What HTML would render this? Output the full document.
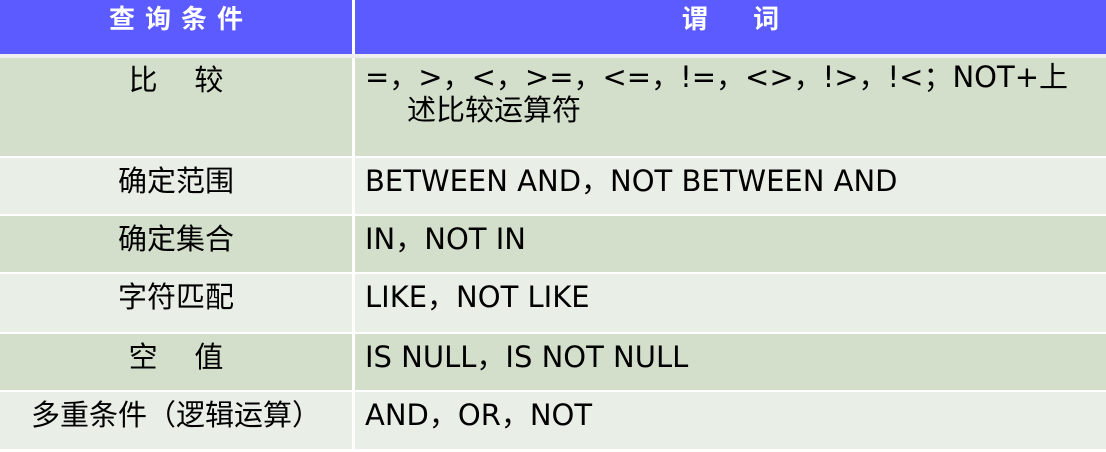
<!DOCTYPE html><html><head><meta charset="utf-8"><style>
body{margin:0;width:1106px;height:452px;background:#fff;position:relative;overflow:hidden;font-family:"DejaVu Sans","Noto Sans CJK SC",sans-serif;font-size:29px;color:#000}
.c{position:absolute;box-sizing:border-box;white-space:nowrap}
.l{left:0;width:352px;text-align:center}
.r{left:355px;width:751px;padding-left:10px}
.h{background:#5b5bff;color:#fff;font-weight:bold;top:0;height:54px;line-height:40px;font-size:26px;letter-spacing:10px}
.d{background:#d3dfcb}.e{background:#e9eee6}
</style></head><body>
<div class="c" style="left:0;top:54px;width:1106px;height:4px;background:#eee"></div>
<div class="c l h" style="padding-left:10px">查询条件</div><div class="c r h" style="padding:0;text-align:center;letter-spacing:0">谓&nbsp;&nbsp;&nbsp;&nbsp;&nbsp;词</div>
<div class="c l d" style="top:58px;height:98px;padding-top:2px;line-height:40px">比&nbsp;&nbsp;&nbsp;&nbsp;较</div>
<div class="c r d" style="top:58px;height:98px;padding-top:3px;line-height:33px">=，&gt;，&lt;，&gt;=，&lt;=，!=，&lt;&gt;，!&gt;，!&lt;；NOT+上<br><span style="padding-left:42px">述比较运算符</span></div>
<div class="c l e" style="top:158px;height:56px;line-height:46px">确定范围</div><div class="c r e" style="top:158px;height:56px;line-height:46px">BETWEEN AND，NOT BETWEEN AND</div>
<div class="c l d" style="top:216px;height:56px;line-height:46px">确定集合</div><div class="c r d" style="top:216px;height:56px;line-height:46px">IN，NOT IN</div>
<div class="c l e" style="top:274px;height:58px;line-height:46px">字符匹配</div><div class="c r e" style="top:274px;height:58px;line-height:46px">LIKE，NOT LIKE</div>
<div class="c l d" style="top:334px;height:56px;line-height:46px">空&nbsp;&nbsp;&nbsp;&nbsp;值</div><div class="c r d" style="top:334px;height:56px;line-height:46px">IS NULL，IS NOT NULL</div>
<div class="c l e" style="top:392px;height:57px;line-height:46px">多重条件（逻辑运算）</div><div class="c r e" style="top:392px;height:57px;line-height:46px">AND，OR，NOT</div>
</body></html>
